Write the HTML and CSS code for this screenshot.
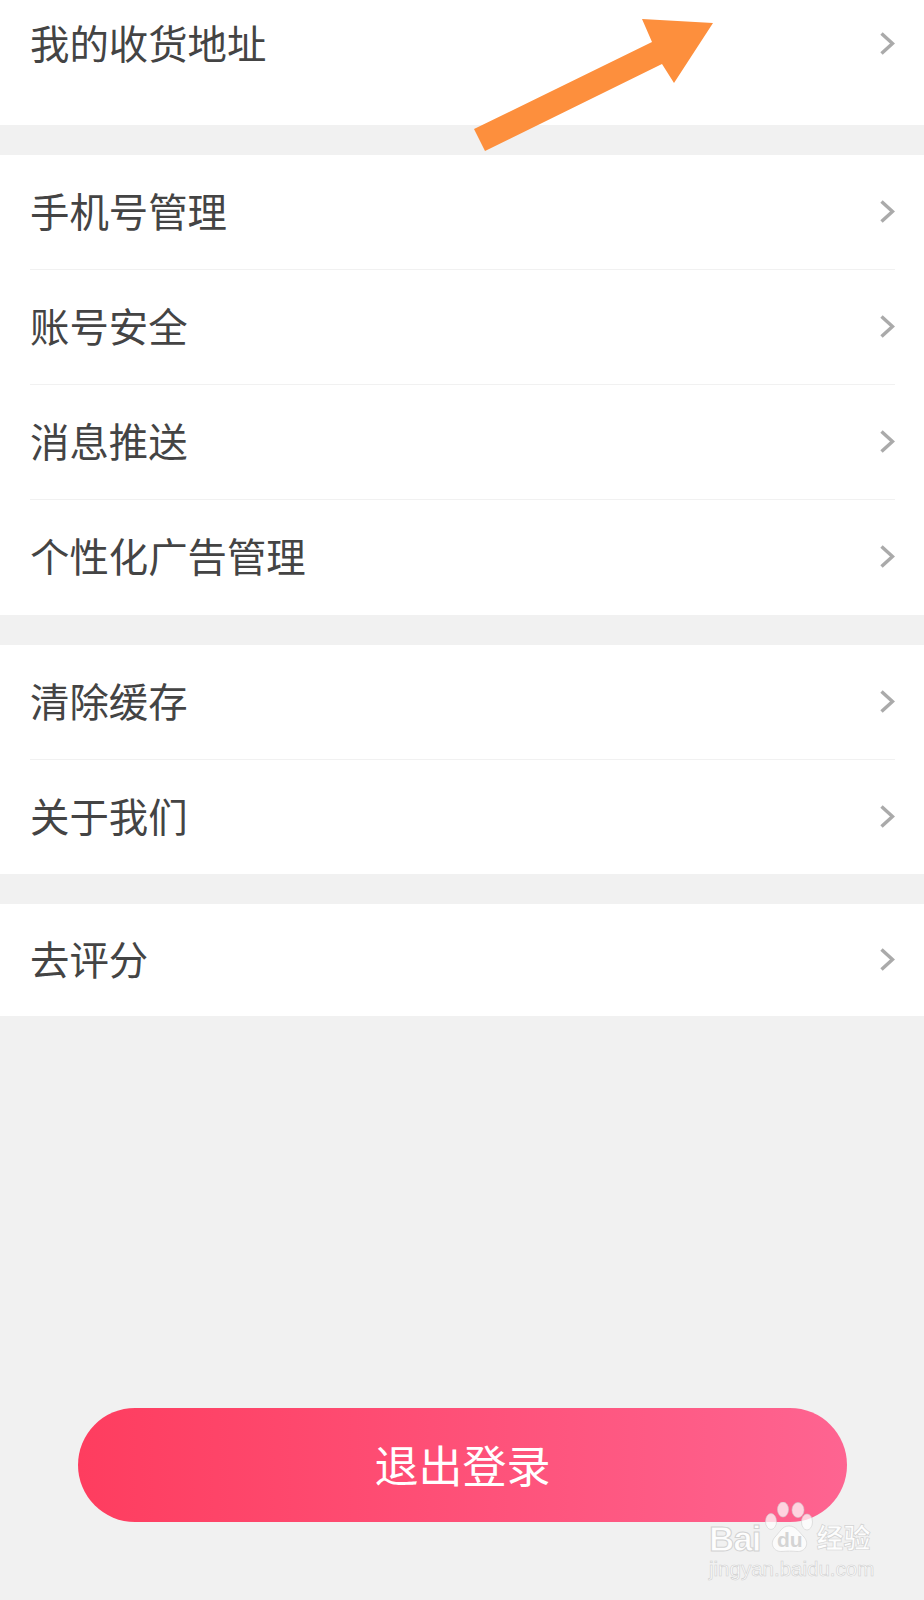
FILE: index.html
```html
<!DOCTYPE html>
<html lang="zh-CN">
<head>
    <meta charset="UTF-8">
    <meta name="viewport" content="width=device-width, initial-scale=1.0">
    <title>设置</title>
    <link rel="stylesheet" href="styles.css">
</head>
<body>
    <div class="page">
        <div class="group">
            <div class="row row-cut">
                <span class="row-title">我的收货地址</span>
                <svg class="chevron" viewBox="0 0 16 25"><path d="M2.5 2.5L13.5 12.5L2.5 22.5"/></svg>
            </div>
        </div>

        <div class="group group-tall">
            <div class="row">
                <span class="row-title">手机号管理</span>
                <svg class="chevron" viewBox="0 0 16 25"><path d="M2.5 2.5L13.5 12.5L2.5 22.5"/></svg>
            </div>
            <div class="row">
                <span class="row-title">账号安全</span>
                <svg class="chevron" viewBox="0 0 16 25"><path d="M2.5 2.5L13.5 12.5L2.5 22.5"/></svg>
            </div>
            <div class="row">
                <span class="row-title">消息推送</span>
                <svg class="chevron" viewBox="0 0 16 25"><path d="M2.5 2.5L13.5 12.5L2.5 22.5"/></svg>
            </div>
            <div class="row">
                <span class="row-title">个性化广告管理</span>
                <svg class="chevron" viewBox="0 0 16 25"><path d="M2.5 2.5L13.5 12.5L2.5 22.5"/></svg>
            </div>
        </div>

        <div class="group">
            <div class="row">
                <span class="row-title">清除缓存</span>
                <svg class="chevron" viewBox="0 0 16 25"><path d="M2.5 2.5L13.5 12.5L2.5 22.5"/></svg>
            </div>
            <div class="row">
                <span class="row-title">关于我们</span>
                <svg class="chevron" viewBox="0 0 16 25"><path d="M2.5 2.5L13.5 12.5L2.5 22.5"/></svg>
            </div>
        </div>

        <div class="group group-single">
            <div class="row">
                <span class="row-title">去评分</span>
                <svg class="chevron" viewBox="0 0 16 25"><path d="M2.5 2.5L13.5 12.5L2.5 22.5"/></svg>
            </div>
        </div>

        <div class="logout-wrap">
            <button class="logout-button">退出登录</button>
        </div>

        <!-- orange annotation arrow drawn over the first row -->
        <svg class="arrow" viewBox="0 0 924 160">
            <polygon points="713,23 642,19 652,42 474,129 485,151 662,64 674,83"/>
        </svg>

        <div class="watermark">
            <div class="wm-top">
                <span class="wm-bai">Bai</span>
                <svg class="wm-paw" viewBox="0 0 48 50">
                    <ellipse cx="6" cy="19.500" rx="5.500" ry="8"/>
                    <ellipse cx="18" cy="7.500" rx="5.500" ry="7.500"/>
                    <ellipse cx="33" cy="8" rx="6" ry="7.500"/>
                    <ellipse cx="42" cy="20" rx="5.500" ry="8"/>
                    <path d="M24 24C17 24 15 30 10 35C4 42 9 50 17 49.500C21 49 28 49 32 49.500C40 50 45 42 39 35C34 30 31 24 24 24Z"/>
                </svg>
                <span class="wm-du">du</span>
                <span class="wm-cn">经验</span>
            </div>
            <div class="wm-url">jingyan.baidu.com</div>
        </div>
    </div>
</body>
</html>
```

FILE: styles.css
```css
* {
    margin: 0;
    padding: 0;
    box-sizing: border-box;
}

body {
    font-family: "Noto Sans CJK SC", "Liberation Sans", sans-serif;
    background: #f1f1f1;
    color: #444;
}

.page {
    position: relative;
    height: 1600px;
    overflow: hidden;
}

.group {
    background: #fff;
    margin-bottom: 30px;
    padding: 0 29px 0 30px;
}

.group-tall {
    padding-bottom: 1px;
}

.row {
    height: 115px;
    display: flex;
    align-items: center;
    justify-content: space-between;
    border-bottom: 1px solid #f1f1f1;
}

.row:last-child {
    height: 114px;
    border-bottom: none;
}

.group-single .row:last-child {
    height: 112px;
}

/* first row is scrolled partly off the top */
.row-cut,
.row-cut:last-child {
    height: 125px;
    padding-bottom: 37px;
}

.row-title {
    font-size: 39.4px;
    line-height: 1;
    margin-bottom: 4px;
}

.chevron {
    width: 16px;
    height: 25px;
    margin-bottom: 2px;
    fill: none;
    stroke: #aaa;
    stroke-width: 3.5;
}

.logout-wrap {
    position: absolute;
    left: 78px;
    right: 77px;
    top: 1408px;
}

.logout-button {
    width: 100%;
    height: 114px;
    padding-bottom: 3px;
    border: none;
    border-radius: 57px;
    background: linear-gradient(90deg, #fe3d5f 0%, #fe6491 100%);
    color: #fff;
    font-family: inherit;
    font-size: 44px;
}

.arrow {
    position: absolute;
    left: 0;
    top: 0;
    width: 924px;
    height: 160px;
    fill: #fd8f3d;
}

.watermark {
    position: absolute;
    left: 709px;
    top: 1502px;
    width: 170px;
    font-family: "Liberation Sans", sans-serif;
    color: rgba(255, 255, 255, 0.9);
}

.wm-top {
    position: relative;
    display: flex;
    align-items: flex-end;
    height: 50px;
}

.wm-bai {
    font-size: 35px;
    font-weight: 700;
    line-height: 30px;
    letter-spacing: -1px;
    margin-bottom: -2px;
    -webkit-text-stroke: 1px #d2d2d2;
}

.wm-paw {
    width: 48px;
    height: 50px;
    margin-left: 5px;
    flex-shrink: 0;
    fill: rgba(255, 255, 255, 0.72);
    stroke: rgba(205, 205, 205, 0.7);
    stroke-width: 0.8;
}

.wm-du {
    position: absolute;
    left: 68px;
    bottom: 2px;
    font-size: 21px;
    font-weight: 700;
    line-height: 20px;
    color: #d4d4d4;
}

.wm-cn {
    font-family: "Noto Sans CJK SC", sans-serif;
    font-size: 27px;
    font-weight: 700;
    line-height: 30px;
    margin-left: 3px;
    -webkit-text-stroke: 0.7px #d2d2d2;
}

.wm-url {
    margin-top: 7px;
    font-size: 20.5px;
    line-height: 20px;
    white-space: nowrap;
    -webkit-text-stroke: 0.6px #cfcfcf;
}
```
